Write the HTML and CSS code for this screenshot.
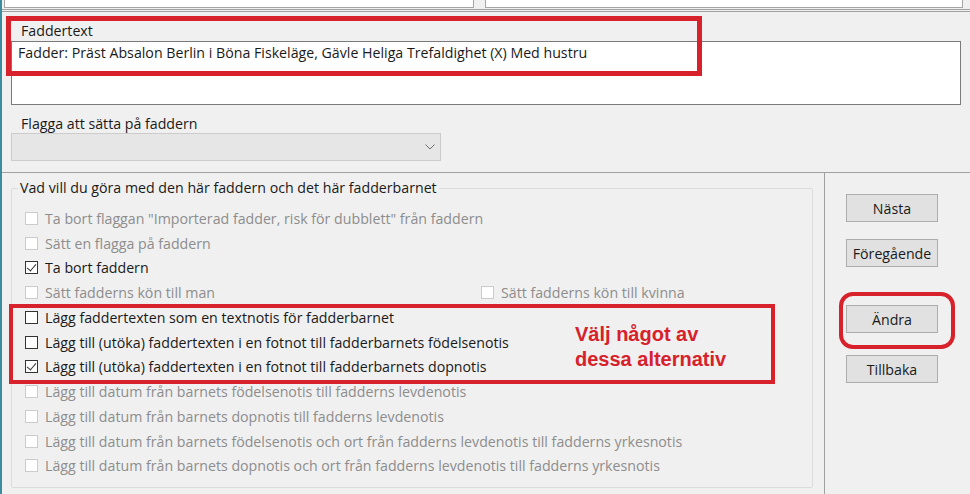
FILE: index.html
```html
<!DOCTYPE html>
<html lang="sv">
<head>
    <meta charset="UTF-8">
    <meta name="viewport" content="width=device-width, initial-scale=1.0">
    <title>Faddrar</title>
    <link rel="stylesheet" href="styles.css">
</head>
<body>
    <div class="window">
        <div class="top-fields">
            <div class="field field-left"></div>
            <div class="field"></div>
        </div>

        <div class="upper">
            <div class="label">Faddertext</div>
            <div class="textbox">Fadder: Präst Absalon Berlin i Böna Fiskeläge, Gävle Heliga Trefaldighet (X) Med hustru</div>
            <div class="label label-flag">Flagga att sätta på faddern</div>
            <div class="combo">
                <svg class="chevron" width="10" height="6" viewBox="0 0 10 6"><polyline points="0.5,0.5 5,5 9.5,0.5" fill="none" stroke="#707070" stroke-width="1"/></svg>
            </div>
        </div>

        <div class="lower">
            <fieldset class="group">
                <legend>Vad vill du göra med den här faddern och det här fadderbarnet</legend>
                <div class="rows">
                    <div class="row disabled"><span class="box"></span>Ta bort flaggan "Importerad fadder, risk för dubblett" från faddern</div>
                    <div class="row disabled"><span class="box"></span>Sätt en flagga på faddern</div>
                    <div class="row"><span class="box checked"></span>Ta bort faddern</div>
                    <div class="row disabled">
                        <span class="half"><span class="box"></span>Sätt fadderns kön till man</span>
                        <span class="box"></span>Sätt fadderns kön till kvinna
                    </div>
                    <div class="row"><span class="box"></span>Lägg faddertexten som en textnotis för fadderbarnet</div>
                    <div class="row"><span class="box"></span>Lägg till (utöka) faddertexten i en fotnot till fadderbarnets födelsenotis</div>
                    <div class="row"><span class="box checked"></span>Lägg till (utöka) faddertexten i en fotnot till fadderbarnets dopnotis</div>
                    <div class="row disabled"><span class="box"></span>Lägg till datum från barnets födelsenotis till fadderns levdenotis</div>
                    <div class="row disabled"><span class="box"></span>Lägg till datum från barnets dopnotis till fadderns levdenotis</div>
                    <div class="row disabled"><span class="box"></span>Lägg till datum från barnets födelsenotis och ort från fadderns levdenotis till fadderns yrkesnotis</div>
                    <div class="row disabled"><span class="box"></span>Lägg till datum från barnets dopnotis och ort från fadderns levdenotis till fadderns yrkesnotis</div>
                </div>
            </fieldset>

            <div class="buttons">
                <button class="btn">Nästa</button>
                <button class="btn btn-prev">Föregående</button>
                <button class="btn btn-change">Ändra</button>
                <button class="btn btn-back">Tillbaka</button>
            </div>
        </div>

        <!-- markeringar ovanpå skärmbilden -->
        <div class="mark mark-text"></div>
        <div class="mark mark-options"></div>
        <div class="mark mark-button"></div>
        <div class="note">Välj något av<br>dessa alternativ</div>
    </div>
</body>
</html>
```

FILE: styles.css
```css
* {
    box-sizing: border-box;
}
body {
    margin: 0;
    font-family: "Open Sans", "Noto Sans", sans-serif;
    font-size: 14.2px;
    color: #1a1a1a;
    background-color: #f0f0f0;
}
.window {
    position: relative;
    width: 970px;
    height: 494px;
    overflow: hidden;
    border-left: 2px solid #3b8d9d;
    background-color: #f0f0f0;
}
.top-fields {
    display: flex;
    gap: 11px;
    height: 12px;
    padding: 0 7px 0 2px;
    border-bottom: 3px double #a0a0a0;
}
.field {
    flex: 1;
    height: 8px;
    background-color: #fff;
    border: 1px solid #a6a6a6;
    border-top: none;
}
.field-left {
    flex: none;
    width: 470px;
}
.upper {
    height: 161px;
    padding: 10px 9px 0 9px;
    border-bottom: 1px solid #a0a0a0;
}
.label {
    height: 18px;
    line-height: 18px;
    padding-left: 10px;
}
.textbox {
    margin-top: 1px;
    height: 64px;
    padding: 2px 6px;
    line-height: 18px;
    background-color: #fff;
    border: 1px solid #7a7a7a;
}
.label-flag {
    margin-top: 10px;
}
.combo {
    display: flex;
    align-items: center;
    justify-content: flex-end;
    width: 430px;
    height: 28px;
    padding-right: 5px;
    background-color: #e6e6e6;
    border: 1px solid #cccccc;
}
.lower {
    display: flex;
    height: 321px;
}
.group {
    width: 802px;
    height: 309px;
    margin: 6px 0 0 9px;
    padding: 0 0 0 6px;
    border: 1px solid #dcdcdc;
    border-radius: 2px;
}
.group legend {
    padding: 0 2px;
    line-height: 18px;
}
.rows {
    padding-top: 9px;
}
.row {
    display: flex;
    align-items: center;
    height: 24.75px;
    white-space: nowrap;
}
.row.disabled {
    color: #8d8d8d;
}
.half {
    display: flex;
    align-items: center;
    width: 463px;
}
.box {
    position: relative;
    flex: none;
    width: 13px;
    height: 13px;
    margin: 0 7px 0 7px;
    background-color: #fff;
    border: 1px solid #333;
}
.half + .box {
    margin-left: 0;
}
.disabled .box {
    border-color: #cccccc;
}
.box.checked::after {
    content: "";
    position: absolute;
    left: 3px;
    top: 0px;
    width: 4px;
    height: 8px;
    border-right: 1px solid #333;
    border-bottom: 1px solid #333;
    transform: rotate(40deg);
}
.buttons {
    display: flex;
    flex-direction: column;
    align-items: flex-start;
    flex: 1;
    margin-left: 11px;
    padding: 21px 0 0 21px;
    border-left: 1px solid #a0a0a0;
}
.btn {
    width: 92px;
    height: 28px;
    padding: 0;
    font-family: inherit;
    font-size: 14.2px;
    color: #1a1a1a;
    background-color: #e1e1e1;
    border: 1px solid #adadad;
}
.btn-prev {
    margin-top: 17px;
}
.btn-change {
    margin-top: 38px;
}
.btn-back {
    margin-top: 22px;
}
.mark {
    position: absolute;
    border: 5px solid #d7212b;
}
.mark-text {
    left: 4px;
    top: 16px;
    width: 696px;
    height: 60px;
}
.mark-options {
    left: 7px;
    top: 304px;
    width: 766px;
    height: 80px;
    border-width: 4px;
}
.mark-button {
    left: 837px;
    top: 292px;
    width: 116px;
    height: 57px;
    border-width: 4px;
    border-radius: 14px;
}
.note {
    position: absolute;
    left: 573px;
    top: 322px;
    font-family: "Liberation Sans", Arial, sans-serif;
    font-size: 20px;
    font-weight: bold;
    line-height: 25px;
    color: #d7212b;
}
```
